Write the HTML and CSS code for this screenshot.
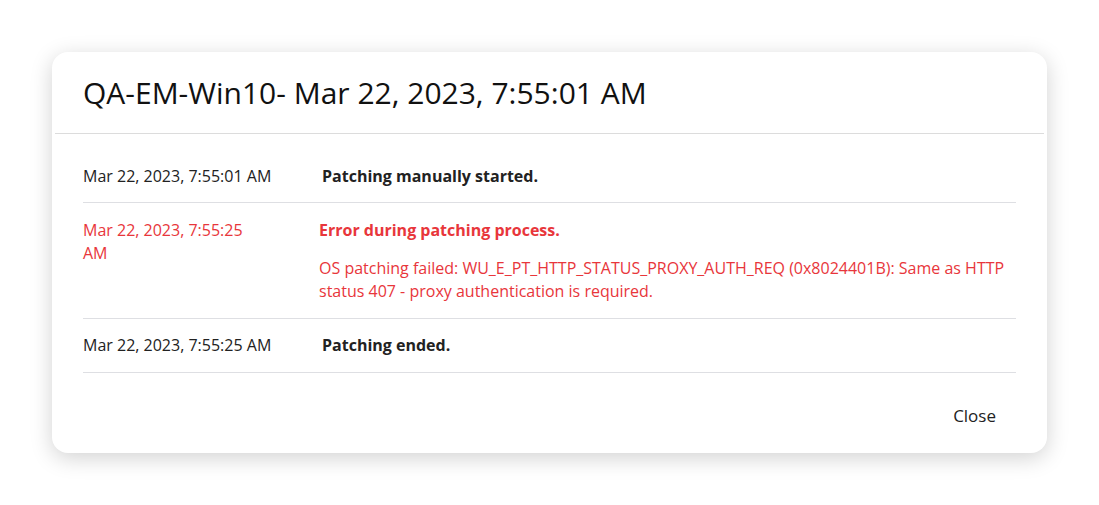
FILE: index.html
```html
<!DOCTYPE html>
<html lang="en">
<head>
    <meta charset="UTF-8">
    <meta name="viewport" content="width=device-width, initial-scale=1.0">
    <title>Patch history</title>
    <link rel="stylesheet" href="styles.css">
</head>
<body>
    <div class="dialog">
        <div class="dialog-header">
            <h1>QA-EM-Win10- Mar 22, 2023, 7:55:01 AM</h1>
        </div>
        <div class="event-list">
            <div class="event">
                <div class="event-time">Mar 22, 2023, 7:55:01 AM</div>
                <div class="event-msg">
                    <div class="event-title">Patching manually started.</div>
                </div>
            </div>
            <div class="event error">
                <div class="event-time">Mar 22, 2023, 7:55:25 AM</div>
                <div class="event-msg">
                    <div class="event-title">Error during patching process.</div>
                    <div class="event-detail">OS patching failed: WU_E_PT_HTTP_STATUS_PROXY_AUTH_REQ (0x8024401B): Same as HTTP status 407 - proxy authentication is required.</div>
                </div>
            </div>
            <div class="event">
                <div class="event-time">Mar 22, 2023, 7:55:25 AM</div>
                <div class="event-msg">
                    <div class="event-title">Patching ended.</div>
                </div>
            </div>
        </div>
        <div class="dialog-footer">
            <button class="btn-close">Close</button>
        </div>
    </div>
</body>
</html>
```

FILE: styles.css
```css
body {
    margin: 0;
    padding: 52px;
    background: #fff;
    font-family: "Open Sans", "Noto Sans", Arial, sans-serif;
    color: #222;
}
.dialog {
    background: #fff;
    border-radius: 16px;
    box-shadow: 0 5px 22px rgba(0, 0, 0, 0.18);
    height: 401px;
    box-sizing: border-box;
}
.dialog-header {
    padding: 21px 31px 20px 28px;
    margin: 0 3px;
    border-bottom: 1px solid #dcdcdc;
}
.dialog-header h1 {
    margin: 0;
    font-size: 30px;
    font-weight: 400;
    line-height: 40px;
    color: #111;
}
.event-list {
    padding: 16px 31px 0;
}
.event {
    display: grid;
    grid-template-columns: 239px 1fr;
    padding: 15px 0;
    border-bottom: 1px solid #dedfe3;
    font-size: 16px;
    line-height: 23px;
}
.event:first-child {
    padding-bottom: 14px;
}
.event-title {
    font-weight: 700;
}
.event.error {
    grid-template-columns: 182px 1fr;
    column-gap: 54px;
    color: #e8363b;
    padding-top: 16px;
}
.event-detail {
    margin-top: 15px;
}
.dialog-footer {
    display: flex;
    justify-content: flex-end;
    padding: 23px 31px 18px;
}
.btn-close {
    font-family: inherit;
    font-size: 17px;
    line-height: 24px;
    padding: 8px 20px;
    border: none;
    background: none;
    color: #222;
    cursor: pointer;
}
```
